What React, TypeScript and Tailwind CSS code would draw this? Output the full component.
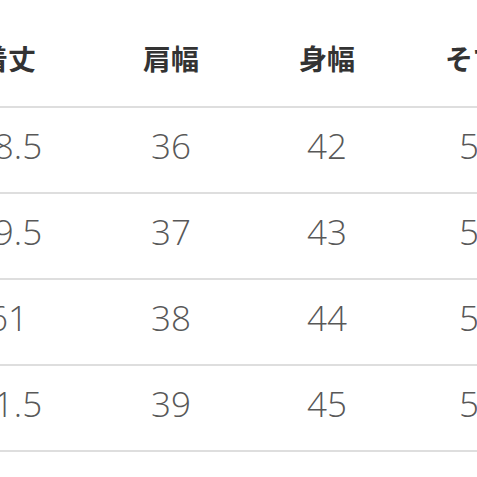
const headers = ["着丈", "肩幅", "身幅", "そで丈"];

const rows = [
  ["58.5", "36", "42", "58"],
  ["59.5", "37", "43", "59"],
  ["61", "38", "44", "58"],
  ["61.5", "39", "45", "59"],
];

export default function App() {
  return (
    <div className="w-[477px] h-[477px] overflow-hidden bg-white">
      <div className="ml-[-77px] w-[630px]">
        <div className="grid grid-cols-[170px_156px_156px_148px] h-[106px] items-center pt-[10px]">
          {headers.map((h, j) => (
            <div
              key={h}
              className={
                "text-center text-[28px] font-bold text-[#333] font-['Noto_Sans_CJK_JP',sans-serif] whitespace-nowrap" +
                (j === 3 ? " pl-[16px]" : "")
              }
            >
              {h}
            </div>
          ))}
        </div>
        {rows.map((r, i) => (
          <div
            key={i}
            className="grid grid-cols-[170px_156px_156px_148px] h-[86px] items-center border-t-2 border-[#dedede] pb-[9px]"
          >
            {r.map((v, j) => (
              <div
                key={j}
                className="text-center text-[35px] font-light text-[#585858] font-['Open_Sans',sans-serif] leading-none"
              >
                {v}
              </div>
            ))}
          </div>
        ))}
        <div className="border-t-2 border-[#dedede]" />
      </div>
    </div>
  );
}
